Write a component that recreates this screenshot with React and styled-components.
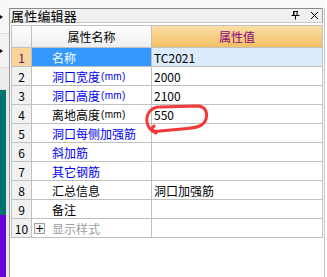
import React from "react";
import styled, { createGlobalStyle } from "styled-components";

const GlobalStyle = createGlobalStyle`
  html, body {
    margin: 0;
    padding: 0;
    background: #ffffff;
  }
  body {
    font-family: "Noto Sans CJK SC", "Liberation Sans", sans-serif;
    font-size: 12px;
    color: #000;
  }
`;

const rows = [
  { n: 1, name: "名称", value: "TC2021", tone: "selected" },
  { n: 2, name: "洞口宽度", unit: "(mm)", value: "2000", tone: "blue" },
  { n: 3, name: "洞口高度", unit: "(mm)", value: "2100", tone: "blue" },
  { n: 4, name: "离地高度", unit: "(mm)", value: "550", tone: "black" },
  { n: 5, name: "洞口每侧加强筋", tone: "blue" },
  { n: 6, name: "斜加筋", tone: "blue" },
  { n: 7, name: "其它钢筋", tone: "blue" },
  { n: 8, name: "汇总信息", value: "洞口加强筋", tone: "black" },
  { n: 9, name: "备注", tone: "black" },
  { n: 10, name: "显示样式", tone: "gray", expandable: true },
];

const nameColors = {
  selected: "#ffffff",
  blue: "#0000f0",
  black: "#000000",
  gray: "#a0a0a0",
};

const App = () => {
  return (
    <Page>
      <GlobalStyle />
      <Sidebar>
        <SideBlock $bg="#f7f7f7" $h={34}>
          <Arrow />
        </SideBlock>
        <SideBlock $bg="#f2f2f2" $h={34}>
          <Arrow />
        </SideBlock>
        <SideBlock $bg="#ececec" $h={22} />
        <SideStripe $color="#00736f" $h={125} />
        <SideStripe $color="#6c00d8" $h={62} />
      </Sidebar>

      <Main>
        <TopSpacer />
        <Panel>
          <TitleBar>
            <Title>属性编辑器</Title>
            <TitleIcons>
              <svg width="9" height="9" viewBox="0 0 9 9">
                <path d="M2 0.5h5M2.5 0.5v4M6 0.5v4M3 0.5v4M0.5 4.5h8M4.5 4.5v4" stroke="#000" strokeWidth="1" fill="none" />
              </svg>
              <svg width="9" height="9" viewBox="0 0 9 9">
                <path d="M1 1L8 8M8 1L1 8" stroke="#000" strokeWidth="1" fill="none" />
              </svg>
            </TitleIcons>
          </TitleBar>

          <Grid>
            <HeaderRow>
              <HeaderCell />
              <HeaderCell>属性名称</HeaderCell>
              <ValueHeader>属性值</ValueHeader>
            </HeaderRow>
            {rows.map((r) => (
              <Row key={r.n}>
                <NumCell $selected={r.tone === "selected"}>{r.n}</NumCell>
                <NameCell $tone={r.tone}>
                  {r.expandable && <PlusBox>+</PlusBox>}
                  <span>{r.name}</span>
                  {r.unit && <Unit>{r.unit}</Unit>}
                </NameCell>
                <ValueCell $selected={r.tone === "selected"}>{r.value}</ValueCell>
              </Row>
            ))}
          </Grid>
        </Panel>
      </Main>

      <Annotation width="327" height="277" viewBox="0 0 327 277">
        <path
          d="M160 107 L197 106 C205 106 208 112 206 119 C204 126 197 128 182 129 L160 131 C153 132 150 129 154 126 M158 107 C150 108 146 115 147 122 C148 128 151 131 156 133"
          stroke="#f23a3a"
          strokeWidth="3"
          fill="none"
          strokeLinecap="round"
          strokeLinejoin="round"
        />
      </Annotation>
    </Page>
  );
};

export default App;

const Page = styled.div`
  position: relative;
  display: flex;
  width: 327px;
  height: 277px;
  overflow: hidden;
  background: #ffffff;
`;

const Sidebar = styled.div`
  display: flex;
  flex-direction: column;
  width: 9px;
  flex: none;
  background: #e9e9e9;
`;

const SideBlock = styled.div`
  display: flex;
  align-items: center;
  height: ${(p) => p.$h}px;
  background: ${(p) => p.$bg};
  border-bottom: 1px solid #e0e0e0;
  box-sizing: border-box;
`;

const Arrow = styled.span`
  width: 0;
  height: 0;
  border-top: 2px solid transparent;
  border-bottom: 2px solid transparent;
  border-left: 3px solid #000;
`;

const SideStripe = styled.div`
  width: 6px;
  height: ${(p) => p.$h}px;
  background: ${(p) => p.$color};
`;

const Main = styled.div`
  display: flex;
  flex-direction: column;
  width: 317px;
  flex: none;
`;

const TopSpacer = styled.div`
  height: 8px;
  background: #fafafa;
`;

const Panel = styled.div`
  flex: 1;
  border-left: 1px solid #9a9a9a;
  border-right: 1px solid #c4c4c4;
  background: #ffffff;
  width: 316px;
  box-sizing: border-box;
`;

const TitleBar = styled.div`
  display: flex;
  align-items: center;
  justify-content: space-between;
  height: 15px;
  width: 313px;
  box-sizing: border-box;
  border-top: 1px solid #8a8a8a;
  border-bottom: 1px solid #c8c8c8;
  border-right: 1px solid #a0a0a0;
  background: #f0f0f0;
  margin-bottom: 2px;
`;

const Title = styled.span`
  font-size: 13px;
  line-height: 13px;
  padding-left: 1px;
  letter-spacing: 0.2px;
`;

const TitleIcons = styled.div`
  display: flex;
  align-items: center;
  gap: 10px;
  padding-right: 3px;
  svg {
    display: block;
  }
`;

const Grid = styled.div`
  margin-left: 1px;
  width: 312px;
  border-left: 1px solid #c0c0c0;
  border-top: 1px solid #c0c0c0;
  box-sizing: border-box;
`;

const RowBase = styled.div`
  display: grid;
  grid-template-columns: 20px 120px 171px;
  & > * {
    box-sizing: border-box;
    border-right: 1px solid #c0c0c0;
    border-bottom: 1px solid #c0c0c0;
    display: flex;
    align-items: center;
    white-space: nowrap;
    overflow: hidden;
  }
`;

const HeaderRow = styled(RowBase)`
  height: 22px;
`;

const HeaderCell = styled.div`
  justify-content: center;
  background: linear-gradient(#ffffff, #eeeeee);
`;

const ValueHeader = styled.div`
  justify-content: center;
  color: #8a007a;
  background: linear-gradient(#fcdea6, #f1c063);
`;

const Row = styled(RowBase)`
  height: 19px;
`;

const NumCell = styled.div`
  justify-content: center;
  background: ${(p) => (p.$selected ? "#f9d59b" : "#f1f1f1")};
  color: ${(p) => (p.$selected ? "#6a0a5a" : "#000")};
`;

const NameCell = styled.div`
  padding-left: ${(p) => (p.$tone === "gray" ? "2px" : "20px")};
  gap: 7px;
  background: ${(p) => (p.$tone === "selected" ? "#3399ff" : "#ffffff")};
  color: ${(p) => nameColors[p.$tone]};
`;

const Unit = styled.span`
  font-family: "Liberation Sans", sans-serif;
  font-size: 10px;
  margin-left: -6px;
  letter-spacing: 0.3px;
`;

const PlusBox = styled.span`
  display: flex;
  align-items: center;
  justify-content: center;
  width: 11px;
  height: 11px;
  box-sizing: border-box;
  border: 1px solid #a0a0a0;
  background: #f4f4f4;
  color: #000;
  font-family: "DejaVu Sans", sans-serif;
  font-size: 11px;
  line-height: 9px;
`;

const ValueCell = styled.div`
  padding-left: 2px;
  background: ${(p) => (p.$selected ? "#ddecfc" : "#ffffff")};
`;

const Annotation = styled.svg`
  position: absolute;
  left: 0;
  top: 0;
  pointer-events: none;
`;
